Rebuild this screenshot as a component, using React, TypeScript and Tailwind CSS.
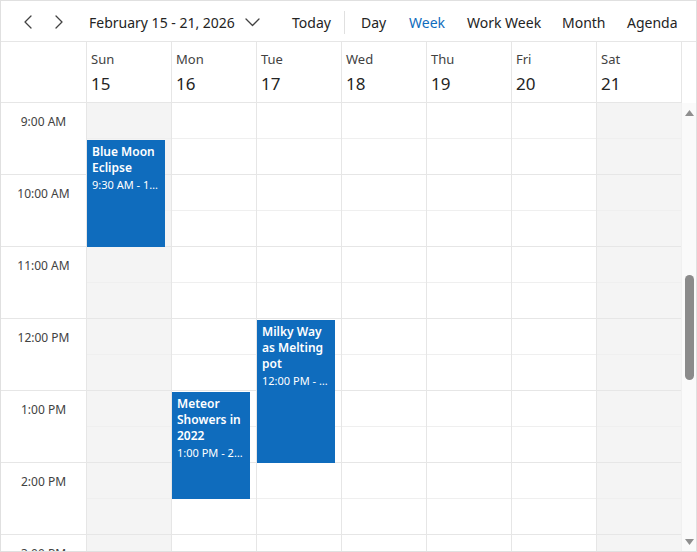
import React from "react";

const hours = ["9:00 AM", "10:00 AM", "11:00 AM", "12:00 PM", "1:00 PM", "2:00 PM", "3:00 PM"];

type Ev = { title: string; time: string; top: number; height: number };

const days: { name: string; date: number; weekend: boolean; events: Ev[] }[] = [
  { name: "Sun", date: 15, weekend: true, events: [{ title: "Blue Moon Eclipse", time: "9:30 AM - 11:00 AM", top: 37, height: 107 }] },
  { name: "Mon", date: 16, weekend: false, events: [{ title: "Meteor Showers in 2022", time: "1:00 PM - 2:30 PM", top: 289, height: 107 }] },
  { name: "Tue", date: 17, weekend: false, events: [{ title: "Milky Way as Melting pot", time: "12:00 PM - 2:00 PM", top: 217, height: 143 }] },
  { name: "Wed", date: 18, weekend: false, events: [] },
  { name: "Thu", date: 19, weekend: false, events: [] },
  { name: "Fri", date: 20, weekend: false, events: [] },
  { name: "Sat", date: 21, weekend: true, events: [] },
];

const slots = Array.from({ length: 14 }, (_, i) => i);

function Chevron({ dir }: { dir: "left" | "right" }) {
  return (
    <svg width="10" height="14" viewBox="0 0 10 14" fill="none" stroke="#424242" strokeWidth="1.3" strokeLinecap="round" strokeLinejoin="round">
      {dir === "left" ? <polyline points="8,1 2,7 8,13" /> : <polyline points="2,1 8,7 2,13" />}
    </svg>
  );
}

export default function App() {
  return (
    <div
      className="w-[697px] h-[552px] border border-[#e0e0e0] bg-white flex flex-col overflow-hidden text-[#242424]"
      style={{ fontFamily: '"Noto Sans", "Open Sans", sans-serif' }}
    >
      {/* Toolbar */}
      <div className="h-[41px] shrink-0 border-b border-[#e6e6e6] flex items-center pt-[2px] text-[14px]">
        <button className="ml-[22px] w-[10px] flex items-center justify-center">
          <Chevron dir="left" />
        </button>
        <button className="ml-[21px] w-[10px] flex items-center justify-center">
          <Chevron dir="right" />
        </button>
        <div className="ml-[25px] w-[203px] flex items-center">
          <span>February 15 - 21, 2026</span>
          <svg className="ml-[10px]" width="15" height="9" viewBox="0 0 15 9" fill="none" stroke="#424242" strokeWidth="1.3" strokeLinecap="round" strokeLinejoin="round">
            <polyline points="1,1 7.5,7.5 14,1" />
          </svg>
        </div>
        <div className="w-[52px]">Today</div>
        <div className="w-px h-[23px] bg-[#e0e0e0]" />
        <div className="ml-[16px] w-[48px]">Day</div>
        <div className="w-[58px] text-[#0f6cbd]">Week</div>
        <div className="w-[95px]">Work Week</div>
        <div className="w-[65px]">Month</div>
        <div>Agenda</div>
      </div>

      {/* Header */}
      <div className="h-[61px] shrink-0 flex">
        <div className="w-[86px] shrink-0 border-r border-b border-[#e6e6e6]" />
        {days.map((d) => (
          <div key={d.name} className="w-[85px] shrink-0 border-r border-b border-[#e6e6e6] pl-[4px] pt-[7px] flex flex-col">
            <span className="text-[13px] leading-[20px] text-[#424242]">{d.name}</span>
            <span className="text-[17px] leading-[24px] mt-[3px]">{d.date}</span>
          </div>
        ))}
        <div className="flex-1" />
      </div>

      {/* Body */}
      <div className="flex-1 flex overflow-hidden">
        <div className="w-[86px] shrink-0 border-r border-[#e6e6e6] flex flex-col">
          {hours.map((h) => (
            <div key={h} className="h-[72px] shrink-0 border-b border-[#e6e6e6]">
              <div className="h-[36px] pt-[1px] flex items-center justify-center text-[12px] text-[#424242]">{h}</div>
            </div>
          ))}
        </div>
        {days.map((d, di) => (
          <div
            key={d.name}
            className={`relative w-[85px] shrink-0 flex flex-col ${d.weekend ? "bg-[#f4f4f4]" : "bg-white"} ${di === 6 ? "border-r border-[#f0f0f0]" : "border-r border-[#e6e6e6]"}`}
          >
            {slots.map((s) => (
              <div
                key={s}
                className={`h-[36px] shrink-0 border-b ${s % 2 === 0 ? "border-[#efefef]" : "border-[#e6e6e6]"}`}
              />
            ))}
            {d.events.map((e) => (
              <div
                key={e.title}
                className="absolute left-0 w-[78px] bg-[#0f6cbd] text-white px-[5px] pt-[4px] overflow-hidden"
                style={{ top: e.top, height: e.height }}
              >
                <div className="text-[12px] leading-[16px] font-semibold">{e.title}</div>
                <div className="text-[11px] leading-[16px] mt-[1px] whitespace-nowrap overflow-hidden text-ellipsis">{e.time}</div>
              </div>
            ))}
          </div>
        ))}
        <div className="flex-1 bg-[#fafafa] flex flex-col items-center">
          <svg className="mt-[7px] shrink-0" width="9" height="6" viewBox="0 0 9 6">
            <polygon points="4.5,0 9,6 0,6" fill="#8f8f8f" />
          </svg>
          <div className="mt-[159px] w-[9px] h-[105px] rounded-full bg-[#8b8b8b] shrink-0" />
          <div className="flex-1" />
          <svg className="mb-[6px] shrink-0" width="9" height="6" viewBox="0 0 9 6">
            <polygon points="0,0 9,0 4.5,6" fill="#8f8f8f" />
          </svg>
        </div>
      </div>
    </div>
  );
}
